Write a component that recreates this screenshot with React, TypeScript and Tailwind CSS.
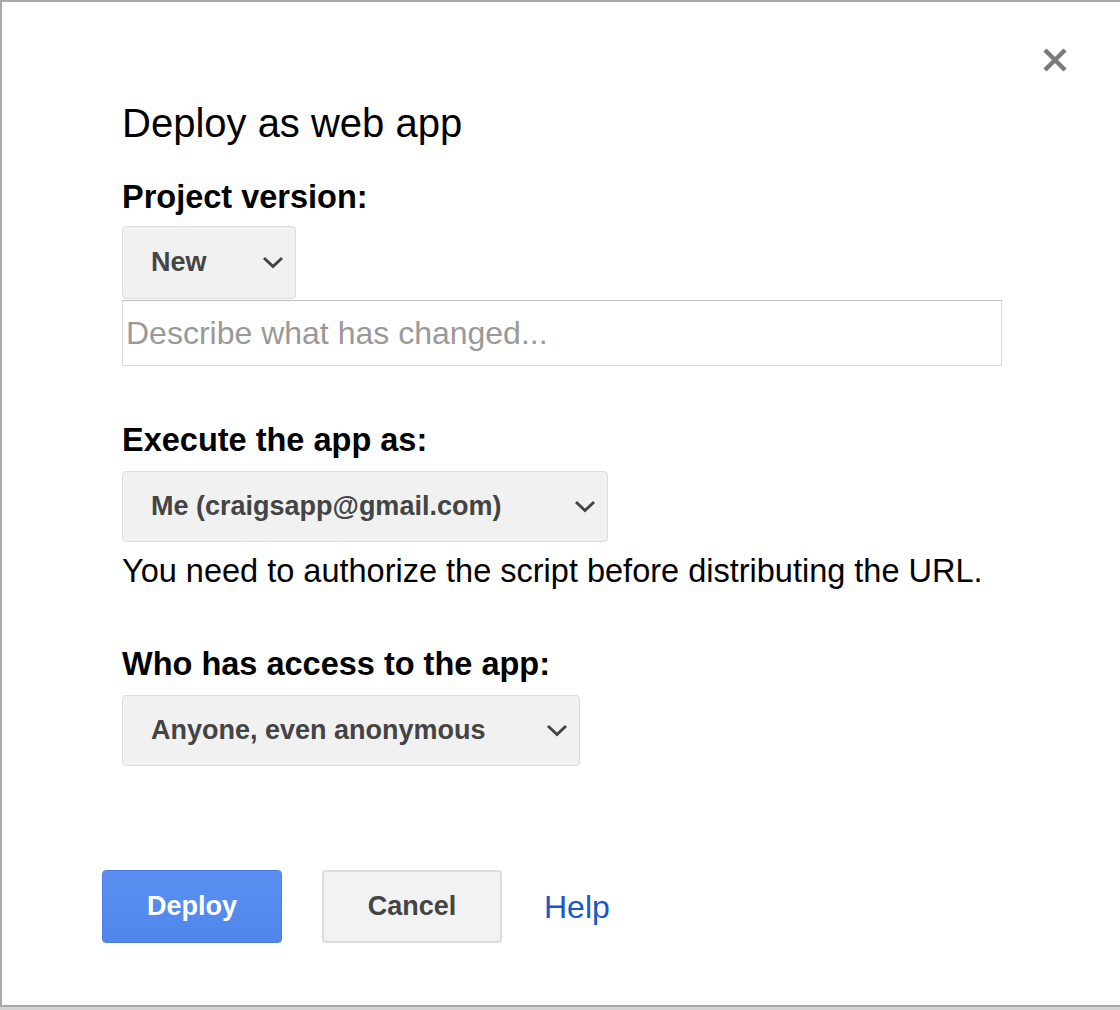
const font = { fontFamily: '"Liberation Sans", Arial, sans-serif' }

const Chevron = () => (
  <svg width="22" height="13" viewBox="0 0 22 13" className="shrink-0">
    <path d="M2 2 L11 10.5 L20 2" fill="none" stroke="#444" strokeWidth="3" />
  </svg>
)

const Select = ({ label, width }: { label: string; width: string }) => (
  <div
    className={`flex items-center justify-between rounded-[4px] border border-[#dcdcdc] bg-[#f1f1f1] pl-[28px] pr-[11px] ${width}`}
  >
    <span className="text-[27px] font-bold text-[#444]">{label}</span>
    <Chevron />
  </div>
)

export default function App() {
  return (
    <div style={font} className="h-[1010px] w-[1120px] bg-[#d4d4d4]">
      <div className="relative h-[1007px] border-b-2 border-l-2 border-t-2 border-[#a9a9a9] bg-white pl-[100px] pt-[101px]">
        <button className="absolute right-[52px] top-[45px] blur-[0.6px]">
          <svg width="26" height="26" viewBox="0 0 26 26">
            <path d="M3 3 L23 23 M23 3 L3 23" stroke="#7a7a7a" strokeWidth="4.5" />
          </svg>
        </button>

        <div className="pl-[20px]">
          <h1 className="text-[40px] leading-[40px] text-black">Deploy as web app</h1>

          <h2 className="mt-[38px] text-[32.5px] font-bold leading-[32px] text-black">Project version:</h2>
          <div className="mt-[13px]">
            <Select label="New" width="h-[73px] w-[174px]" />
          </div>
          <input
            style={font}
            placeholder="Describe what has changed..."
            className="mt-px block h-[66px] w-[880px] border border-[#d9d9d9] border-t-[#c0c0c0] px-[3px] text-[32px] text-black outline-none placeholder:text-[#999]"
          />

          <h2 className="mt-[58px] text-[32.5px] font-bold leading-[32px] text-black">Execute the app as:</h2>
          <div className="mt-[15px]">
            <Select label="Me (craigsapp@gmail.com)" width="h-[71px] w-[486px]" />
          </div>
          <p className="mt-[13px] text-[32.5px] leading-[32px] text-black">
            You need to authorize the script before distributing the URL.
          </p>

          <h2 className="mt-[61px] text-[32.5px] font-bold leading-[32px] text-black">Who has access to the app:</h2>
          <div className="mt-[15px]">
            <Select label="Anyone, even anonymous" width="h-[71px] w-[458px]" />
          </div>
        </div>

        <div className="mt-[104px] flex items-center">
          <button className="h-[73px] w-[180px] rounded-[4px] border border-[#4a7de6] bg-gradient-to-b from-[#5b90f2] to-[#4f86ec] text-[27px] font-bold text-white">
            Deploy
          </button>
          <button className="ml-[40px] h-[73px] w-[180px] rounded-[4px] border-2 border-[#dcdcdc] bg-[#f2f2f2] text-[27px] font-bold text-[#444]">
            Cancel
          </button>
          <a className="ml-[42px] text-[32px] text-[#1a55cc]">Help</a>
        </div>
      </div>
    </div>
  )
}
